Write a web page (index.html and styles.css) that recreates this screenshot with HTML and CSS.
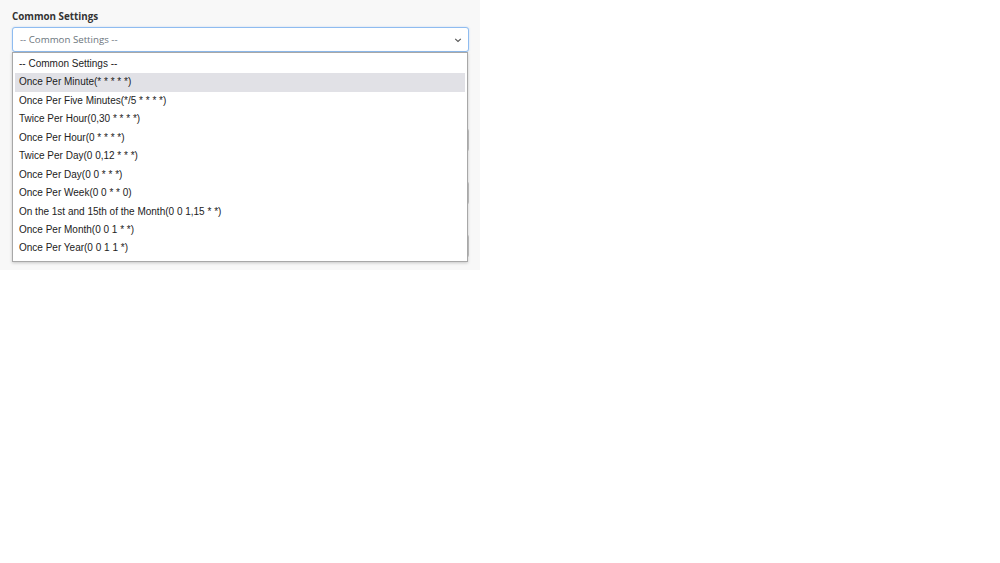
FILE: index.html
```html
<!DOCTYPE html>
<html lang="en">
<head>
    <meta charset="UTF-8">
    <title>Cron Settings</title>
    <link rel="stylesheet" href="styles.css">
</head>
<body>
    <div class="panel">
        <div class="select-field">
            <label class="field-label">Common Settings</label>
            <div class="select-box">
                <span class="select-value">-- Common Settings --</span>
                <svg class="chevron" width="8" height="6" viewBox="0 0 8 6">
                    <path d="M1.2 1.8 L4 4.4 L6.8 1.8" fill="none" stroke="#555" stroke-width="1.1"/>
                </svg>
            </div>
            <ul class="dropdown">
                <li class="option">-- Common Settings --</li>
                <li class="option active">Once Per Minute(* * * * *)</li>
                <li class="option">Once Per Five Minutes(*/5 * * * *)</li>
                <li class="option">Twice Per Hour(0,30 * * * *)</li>
                <li class="option">Once Per Hour(0 * * * *)</li>
                <li class="option">Twice Per Day(0 0,12 * * *)</li>
                <li class="option">Once Per Day(0 0 * * *)</li>
                <li class="option">Once Per Week(0 0 * * 0)</li>
                <li class="option">On the 1st and 15th of the Month(0 0 1,15 * *)</li>
                <li class="option">Once Per Month(0 0 1 * *)</li>
                <li class="option">Once Per Year(0 0 1 1 *)</li>
            </ul>
        </div>

        <!-- inputs covered by the open dropdown -->
        <div class="input first"></div>
        <div class="input"></div>
        <div class="input"></div>
    </div>
</body>
</html>
```

FILE: styles.css
```css
body {
    margin: 0;
    background-color: #ffffff;
    font-family: "Open Sans", "Liberation Sans", sans-serif;
}

.panel {
    width: 480px;
    height: 270px;
    box-sizing: border-box;
    padding: 10px 11px 0 12px;
    background-color: #f8f8f8;
}

.select-field {
    position: relative;
}

.field-label {
    display: block;
    font-size: 9.8px;
    font-weight: 700;
    color: #333;
    line-height: 14px;
    margin-bottom: 3px;
}

.select-box {
    display: flex;
    align-items: center;
    justify-content: space-between;
    height: 25px;
    box-sizing: border-box;
    padding: 0 6px 0 7px;
    background-color: #fff;
    border: 1px solid #8fbcf0;
    border-radius: 3px;
    box-shadow: 0 0 2px rgba(80, 150, 230, 0.35);
}

.select-value {
    font-size: 9.7px;
    color: #6c757d;
}

.chevron {
    display: block;
}

.input {
    height: 22px;
    margin-top: 29px;
    background-color: #fff;
    border: 1px solid #c4c4c4;
    border-radius: 3px;
}

.input.first {
    margin-top: 76px;
}

.dropdown {
    position: absolute;
    top: 42px;
    left: 0;
    width: 456px;
    box-sizing: border-box;
    margin: 0;
    padding: 2px 2px 3px 2px;
    list-style: none;
    background-color: #fff;
    border: 1px solid #a8a8a8;
    box-shadow: 0 1px 3px rgba(0, 0, 0, 0.2);
    z-index: 2;
}

.option {
    height: 18.45px;
    line-height: 18.45px;
    padding: 0 4px;
    font-family: "Liberation Sans", Arial, sans-serif;
    font-size: 10px;
    color: #222;
    white-space: nowrap;
}

.option.active {
    background-color: #e1e1e6;
}
```
